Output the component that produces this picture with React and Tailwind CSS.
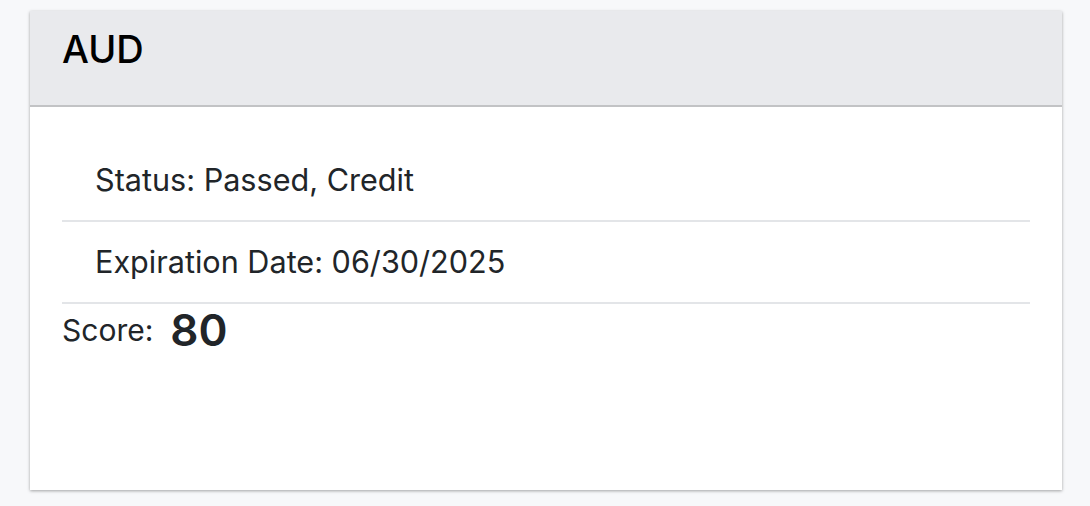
export default function App() {
  return (
    <div className="min-h-screen bg-[#f7f8fa] pt-[11px] pl-[30px]" style={{ fontFamily: 'Inter, "Noto Sans", sans-serif' }}>
      <div className="w-[1032px] h-[479px] bg-white shadow-[0_1px_3px_rgba(0,0,0,0.35)] flex flex-col">
        <div className="h-[96px] bg-[#e9eaed] border-b-2 border-[#c2c3c5] px-8 pt-[15px]">
          <h2 className="text-[38px] leading-[46px] font-medium text-black">AUD</h2>
        </div>
        <div className="px-8 pt-[33px] text-[#212529]">
          <ul>
            <li className="h-[82px] flex items-center pl-[33px] border-b-2 border-[#e3e5e8] text-[30.6px]">Status: Passed, Credit</li>
            <li className="h-[82px] flex items-center pl-[33px] border-b-2 border-[#e3e5e8] text-[30.6px]">Expiration Date: 06/30/2025</li>
          </ul>
          <div className="flex items-center gap-[17px] h-[52px]">
            <span className="text-[30px]">Score:</span>
            <span className="text-[44px] font-semibold">80</span>
          </div>
        </div>
      </div>
    </div>
  );
}
